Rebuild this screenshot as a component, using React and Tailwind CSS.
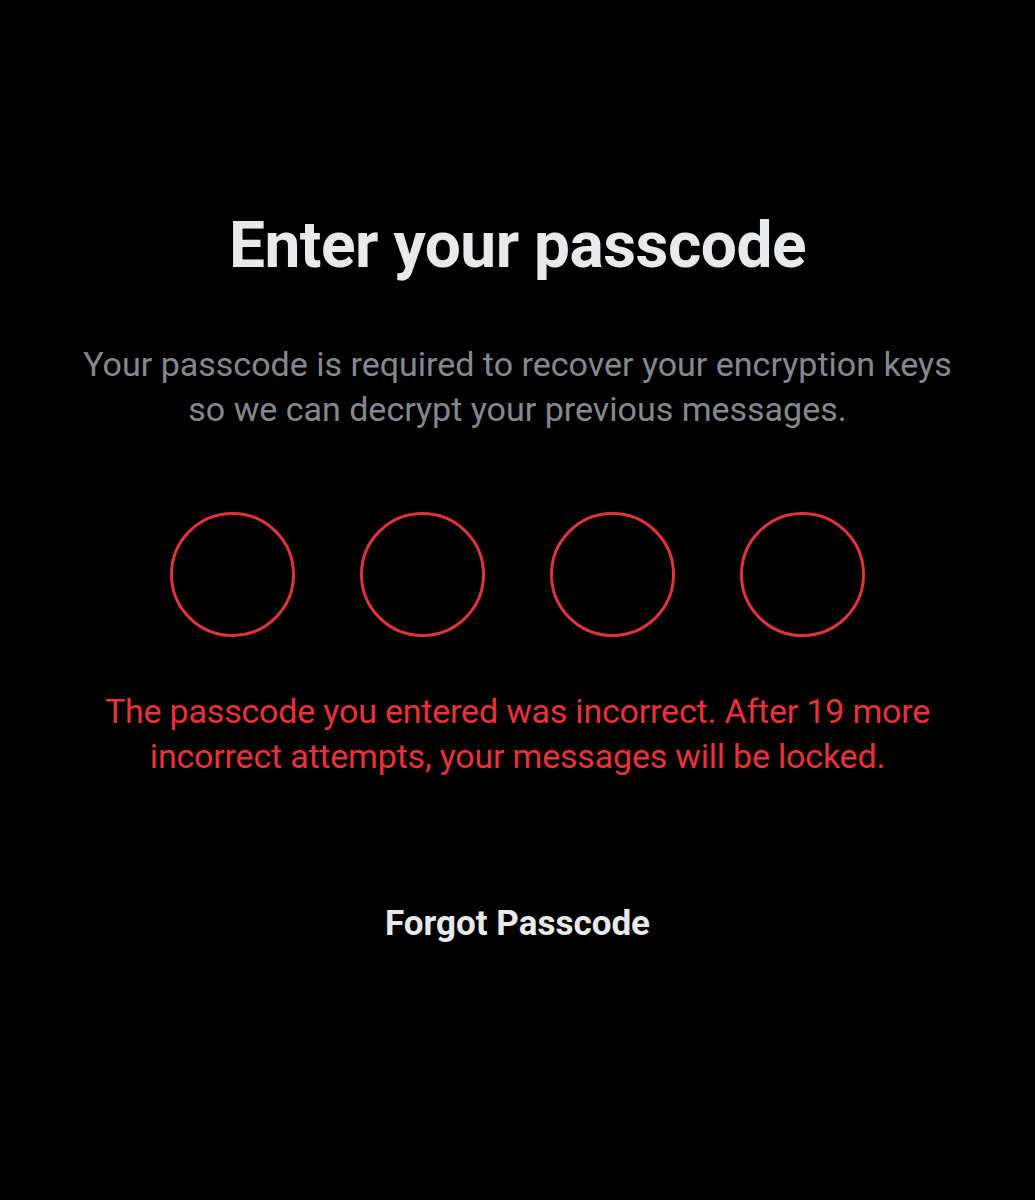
export default function App() {
  const font = { fontFamily: 'Roboto, "Liberation Sans", sans-serif' };
  return (
    <div className="w-[1035px] h-[1200px] bg-black flex flex-col items-center pt-[210px]" style={font}>
      <h1 className="text-[64px] leading-[72px] font-bold text-[#e7e9ea] tracking-[-0.5px]">Enter your passcode</h1>
      <p className="mt-[60px] text-[34px] leading-[45px] text-[#85898e] text-center">
        Your passcode is required to recover your encryption keys<br />so we can decrypt your previous messages.
      </p>
      <div className="mt-[80px] flex gap-[65px]">
        <div className="w-[125px] h-[125px] rounded-full border-[3px] border-[#e0343c]" />
        <div className="w-[125px] h-[125px] rounded-full border-[3px] border-[#e0343c]" />
        <div className="w-[125px] h-[125px] rounded-full border-[3px] border-[#e0343c]" />
        <div className="w-[125px] h-[125px] rounded-full border-[3px] border-[#e0343c]" />
      </div>
      <p className="mt-[52px] text-[34px] leading-[45px] text-[#e8323c] text-center tracking-[-0.2px]">
        The passcode you entered was incorrect. After 19 more<br />incorrect attempts, your messages will be locked.
      </p>
      <button className="mt-[125px] text-[35px] leading-[40px] font-bold text-[#e7e9ea]">Forgot Passcode</button>
    </div>
  );
}
